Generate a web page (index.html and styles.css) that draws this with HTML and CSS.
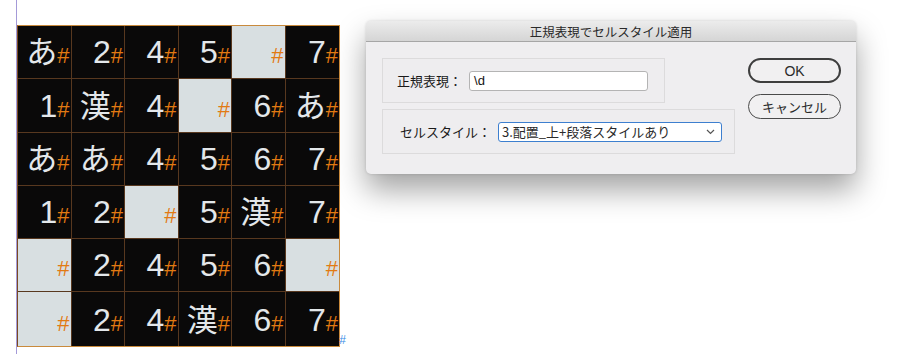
FILE: index.html
```html
<!DOCTYPE html>
<html lang="ja">
<head>
<meta charset="utf-8">
<link rel="stylesheet" href="styles.css">
</head>
<body>
<div class="page">
  <div class="canvas">
    <div class="table">
      <div class="cell"><div class="val"><span class="ch kana">あ</span><span class="hs">#</span></div></div>
      <div class="cell"><div class="val"><span class="ch">2</span><span class="hs">#</span></div></div>
      <div class="cell"><div class="val"><span class="ch">4</span><span class="hs">#</span></div></div>
      <div class="cell"><div class="val"><span class="ch">5</span><span class="hs">#</span></div></div>
      <div class="cell light"><div class="val"><span class="hs">#</span></div></div>
      <div class="cell"><div class="val"><span class="ch">7</span><span class="hs">#</span></div></div>

      <div class="cell"><div class="val"><span class="ch">1</span><span class="hs">#</span></div></div>
      <div class="cell"><div class="val"><span class="ch kana">漢</span><span class="hs">#</span></div></div>
      <div class="cell"><div class="val"><span class="ch">4</span><span class="hs">#</span></div></div>
      <div class="cell light"><div class="val"><span class="hs">#</span></div></div>
      <div class="cell"><div class="val"><span class="ch">6</span><span class="hs">#</span></div></div>
      <div class="cell"><div class="val"><span class="ch kana">あ</span><span class="hs">#</span></div></div>

      <div class="cell"><div class="val"><span class="ch kana">あ</span><span class="hs">#</span></div></div>
      <div class="cell"><div class="val"><span class="ch kana">あ</span><span class="hs">#</span></div></div>
      <div class="cell"><div class="val"><span class="ch">4</span><span class="hs">#</span></div></div>
      <div class="cell"><div class="val"><span class="ch">5</span><span class="hs">#</span></div></div>
      <div class="cell"><div class="val"><span class="ch">6</span><span class="hs">#</span></div></div>
      <div class="cell"><div class="val"><span class="ch">7</span><span class="hs">#</span></div></div>

      <div class="cell"><div class="val"><span class="ch">1</span><span class="hs">#</span></div></div>
      <div class="cell"><div class="val"><span class="ch">2</span><span class="hs">#</span></div></div>
      <div class="cell light"><div class="val"><span class="hs">#</span></div></div>
      <div class="cell"><div class="val"><span class="ch">5</span><span class="hs">#</span></div></div>
      <div class="cell"><div class="val"><span class="ch kana">漢</span><span class="hs">#</span></div></div>
      <div class="cell"><div class="val"><span class="ch">7</span><span class="hs">#</span></div></div>

      <div class="cell light"><div class="val"><span class="hs">#</span></div></div>
      <div class="cell"><div class="val"><span class="ch">2</span><span class="hs">#</span></div></div>
      <div class="cell"><div class="val"><span class="ch">4</span><span class="hs">#</span></div></div>
      <div class="cell"><div class="val"><span class="ch">5</span><span class="hs">#</span></div></div>
      <div class="cell"><div class="val"><span class="ch">6</span><span class="hs">#</span></div></div>
      <div class="cell light"><div class="val"><span class="hs">#</span></div></div>

      <div class="cell light"><div class="val"><span class="hs">#</span></div></div>
      <div class="cell"><div class="val"><span class="ch">2</span><span class="hs">#</span></div></div>
      <div class="cell"><div class="val"><span class="ch">4</span><span class="hs">#</span></div></div>
      <div class="cell"><div class="val"><span class="ch kana">漢</span><span class="hs">#</span></div></div>
      <div class="cell"><div class="val"><span class="ch">6</span><span class="hs">#</span></div></div>
      <div class="cell"><div class="val"><span class="ch">7</span><span class="hs">#</span></div></div>
      <span class="endmark">#</span>
    </div>
  </div>

  <div class="dialog">
    <div class="titlebar">正規表現でセルスタイル適用</div>
    <div class="dbody">
      <div class="fields">
        <div class="group g1">
          <span class="label">正規表現：</span>
          <div class="input">\d</div>
        </div>
        <div class="group g2">
          <span class="label">セルスタイル：</span>
          <div class="select">
            <span>3.配置_上+段落スタイルあり</span>
            <svg class="chev" width="9" height="6" viewBox="0 0 9 6"><path d="M1 1 L4.5 4.5 L8 1" fill="none" stroke="#555" stroke-width="1.2"/></svg>
          </div>
        </div>
      </div>
      <div class="buttons">
        <div class="btn default">OK</div>
        <div class="btn">キャンセル</div>
      </div>
    </div>
  </div>
</div>
</body>
</html>
```

FILE: styles.css
```css
html, body {
  margin: 0;
  padding: 0;
  background: #ffffff;
}
body {
  width: 914px;
  height: 354px;
  overflow: hidden;
  font-family: "Noto Sans CJK JP", "Noto Sans", sans-serif;
}
.page {
  display: flex;
  align-items: flex-start;
  padding-left: 16px;
  height: 354px;
}
.canvas {
  border-left: 1px solid #a49ad8;
  height: 354px;
  padding-top: 25px;
  box-sizing: border-box;
}
.table {
  position: relative;
  display: grid;
  grid-template-columns: repeat(6, 53.5px);
  grid-template-rows: repeat(6, 53.3px);
  border: 1px solid #c98a3c;
  border-left-color: #7a4a22;
  background: #0a0909;
}
.cell {
  display: flex;
  flex-direction: column;
  justify-content: flex-end;
  align-items: flex-end;
  padding: 0 1px 10px 0;
  border-right: 1px solid #58381f;
  border-bottom: 1px solid #58381f;
  background: #0a0909;
  box-sizing: border-box;
}
.cell:nth-child(6n) { border-right: none; }
.cell:nth-child(n+31) { border-bottom: none; }
.cell.light {
  background: #d8dfe1;
}
.val {
  display: flex;
  align-items: baseline;
}
.val::before {
  content: "\200b";
  font: 32px/1 "Liberation Sans", sans-serif;
}
.ch {
  color: #e3e7ea;
  font-size: 32px;
  line-height: 1;
  font-family: "Liberation Sans", sans-serif;
}
.ch.kana {
  font-family: "Noto Sans CJK JP", sans-serif;
  font-size: 31px;
}
.hs {
  color: #e27a12;
  font-size: 22px;
  line-height: 1;
  font-family: "Liberation Sans", sans-serif;
}
.endmark {
  position: absolute;
  right: -7px;
  bottom: 0;
  font-size: 12px;
  line-height: 12px;
  color: #3a8de6;
  font-family: "Liberation Sans", sans-serif;
}

.dialog {
  margin-left: 26px;
  margin-top: 21px;
  width: 490px;
  height: 153px;
  background: #efeef0;
  border-radius: 5px;
  box-shadow: 0 16px 30px rgba(0,0,0,0.36), 0 0 3px rgba(0,0,0,0.15);
  display: flex;
  flex-direction: column;
  overflow: hidden;
}
.titlebar {
  height: 21px;
  background: linear-gradient(#ececec, #d5d5d5);
  border-bottom: 1px solid #a6a6a6;
  text-align: center;
  font-size: 12.5px;
  line-height: 21px;
  color: #2a2a2a;
  box-sizing: border-box;
}
.dbody {
  display: flex;
  justify-content: space-between;
  padding: 16px 15px 0 16px;
}
.fields {
  display: flex;
  flex-direction: column;
  gap: 6px;
}
.group {
  display: flex;
  align-items: center;
  height: 45px;
  box-sizing: border-box;
  border: 1px solid #dcdbdc;
  background: #eeedef;
  font-size: 13px;
  color: #1a1a1a;
}
.g1 {
  width: 283px;
  padding-left: 14px;
}
.g2 {
  width: 353px;
  padding-left: 17px;
}
.label {
  white-space: nowrap;
}
.input {
  margin-left: 7px;
  width: 179px;
  height: 20px;
  box-sizing: border-box;
  background: #ffffff;
  border: 1px solid #b4b4b4;
  border-radius: 3px;
  font-size: 13px;
  line-height: 18px;
  padding-left: 4px;
  color: #111;
  font-family: "Liberation Sans", sans-serif;
}
.select {
  margin-left: 7px;
  width: 224px;
  height: 20px;
  box-sizing: border-box;
  background: #ffffff;
  border: 1.5px solid #3d7fcf;
  border-radius: 3px;
  display: flex;
  align-items: center;
  justify-content: space-between;
  padding: 0 6px 0 3px;
  font-size: 13px;
  color: #2a2a2a;
}
.chev {
  display: block;
}
.buttons {
  display: flex;
  flex-direction: column;
  gap: 11px;
}
.btn {
  width: 93px;
  height: 25px;
  box-sizing: border-box;
  border: 1px solid #4a4a4a;
  border-radius: 13px;
  display: flex;
  align-items: center;
  justify-content: center;
  font-size: 13px;
  color: #2a2a2a;
  background: #f1f0f1;
}
.btn.default {
  border: 2px solid #3e3e3e;
  font-family: "Liberation Sans", sans-serif;
  font-size: 14px;
}
```
